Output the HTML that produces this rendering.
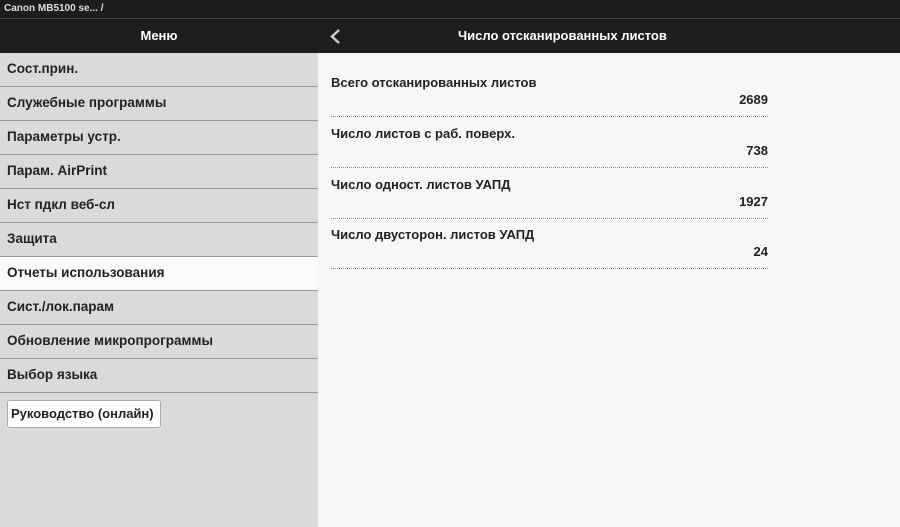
<!DOCTYPE html>
<html><head><meta charset="utf-8"><style>
*{margin:0;padding:0;box-sizing:border-box}
body{width:900px;height:527px;overflow:hidden;font-family:"Liberation Sans",Arial,sans-serif;background:#f7f7f7;position:relative;color:#222}
.top{position:absolute;left:0;top:0;width:900px;height:19px;background:#1c1c1c;border-bottom:1px solid #444;color:#ddd;font-size:10px;font-weight:bold;line-height:18px;padding-left:4px}
.hdr{position:absolute;left:0;top:19px;width:900px;height:34px;background:#1e1e1e;color:#fff;font-weight:bold;font-size:13px}
.side{position:absolute;left:0;top:53px;width:318px;height:474px;background:#dadada}
.it{height:34px;border-bottom:1px solid #999;font-size:13.5px;font-weight:bold;line-height:32px;padding-left:7px;color:#222;white-space:nowrap}
.it.a{background:#fafafa}
.btn{position:absolute;left:7px;top:347px;width:154px;height:28px;background:#fff;border:1px solid #aaa;border-radius:3px;font-size:13px;font-weight:bold;line-height:26px;padding-left:3px;white-space:nowrap}
.row{position:absolute;left:331px;width:437px;border-bottom:1px dotted #888;height:51px;font-size:13px;font-weight:bold;white-space:nowrap}
.row .l{position:absolute;left:0;top:9px}
.row .v{position:absolute;right:0;top:26px}
</style></head><body>
<div class="top">Canon MB5100 se... /</div>
<div class="hdr">
<div style="position:absolute;left:0;width:318px;text-align:center;top:9px">Меню</div>
<svg style="position:absolute;left:328px;top:9px" width="14" height="18"><path d="M11 2 L4 8.5 L11 15" stroke="#ccc" stroke-width="2.5" fill="none"/></svg>
<div style="position:absolute;left:458px;top:9px">Число отсканированных листов</div>
</div>
<div class="side">
<div class="it">Сост.прин.</div>
<div class="it">Служебные программы</div>
<div class="it">Параметры устр.</div>
<div class="it">Парам. AirPrint</div>
<div class="it">Нст пдкл веб-сл</div>
<div class="it">Защита</div>
<div class="it a">Отчеты использования</div>
<div class="it">Сист./лок.парам</div>
<div class="it">Обновление микропрограммы</div>
<div class="it">Выбор языка</div>
<div class="btn">Руководство (онлайн)</div>
</div>
<div class="row" style="top:66px"><span class="l">Всего отсканированных листов</span><span class="v">2689</span></div>
<div class="row" style="top:117px"><span class="l">Число листов с раб. поверх.</span><span class="v">738</span></div>
<div class="row" style="top:168px"><span class="l">Число одност. листов УАПД</span><span class="v">1927</span></div>
<div class="row" style="top:218px"><span class="l">Число двусторон. листов УАПД</span><span class="v">24</span></div>
</body></html>
